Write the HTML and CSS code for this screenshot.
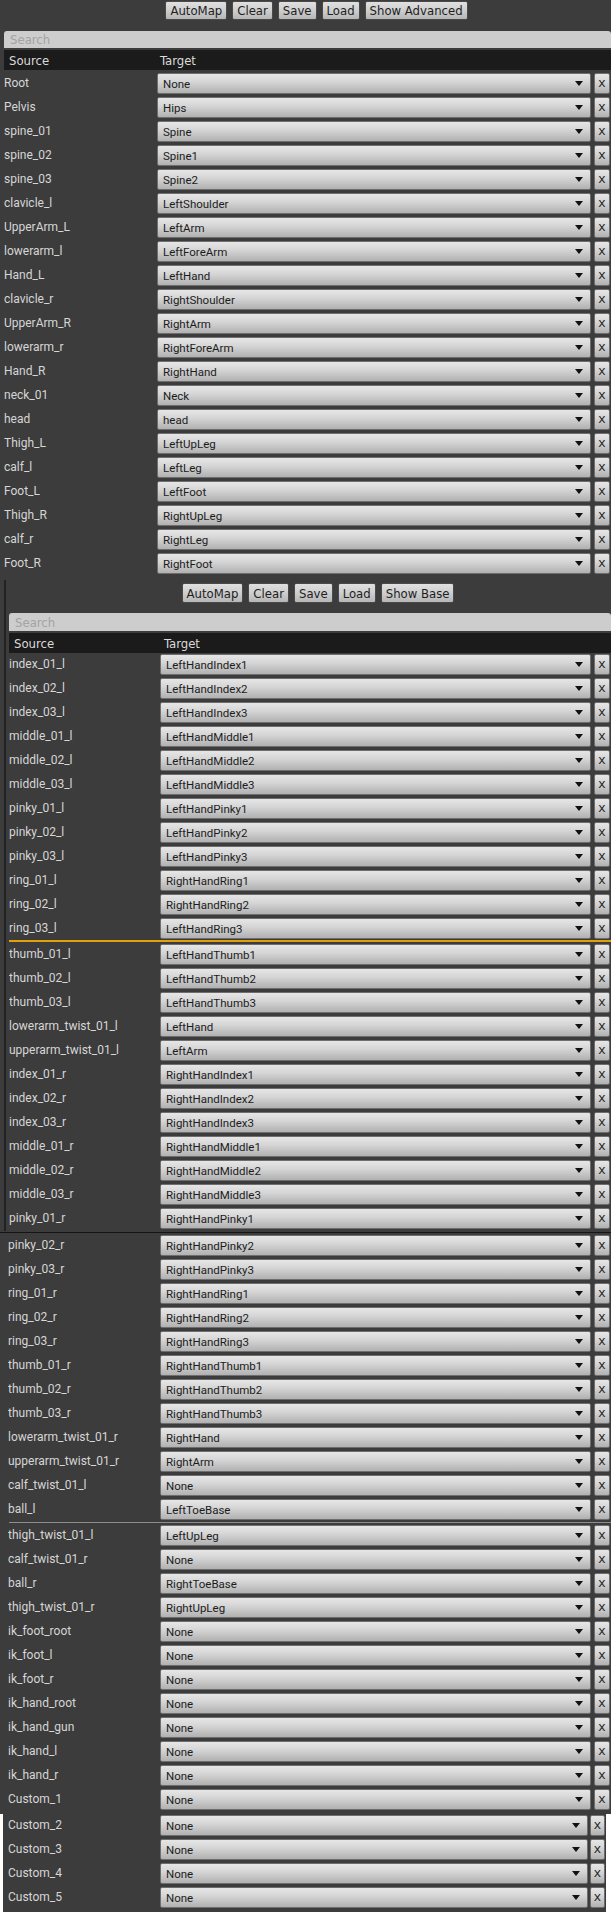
FILE: index.html
```html
<!DOCTYPE html>
<html>
<head>
<meta charset="utf-8">
<link rel="stylesheet" href="styles.css">
</head>
<body>
<section class="sec sec1">
  <div class="toolbar tb1">
    <button class="btn">AutoMap</button><button class="btn">Clear</button><button class="btn">Save</button><button class="btn">Load</button><button class="btn">Show Advanced</button>
  </div>
  <div class="search">Search</div>
  <div class="thead"><span class="th-src">Source</span><span class="th-tgt">Target</span></div>
  <div class="rows">
    <div class="row"><span class="lbl">Root</span><span class="dd"><span class="ddt">None</span><span class="arr"></span></span><span class="xb">x</span></div>
    <div class="row"><span class="lbl">Pelvis</span><span class="dd"><span class="ddt">Hips</span><span class="arr"></span></span><span class="xb">x</span></div>
    <div class="row"><span class="lbl">spine_01</span><span class="dd"><span class="ddt">Spine</span><span class="arr"></span></span><span class="xb">x</span></div>
    <div class="row"><span class="lbl">spine_02</span><span class="dd"><span class="ddt">Spine1</span><span class="arr"></span></span><span class="xb">x</span></div>
    <div class="row"><span class="lbl">spine_03</span><span class="dd"><span class="ddt">Spine2</span><span class="arr"></span></span><span class="xb">x</span></div>
    <div class="row"><span class="lbl">clavicle_l</span><span class="dd"><span class="ddt">LeftShoulder</span><span class="arr"></span></span><span class="xb">x</span></div>
    <div class="row"><span class="lbl">UpperArm_L</span><span class="dd"><span class="ddt">LeftArm</span><span class="arr"></span></span><span class="xb">x</span></div>
    <div class="row"><span class="lbl">lowerarm_l</span><span class="dd"><span class="ddt">LeftForeArm</span><span class="arr"></span></span><span class="xb">x</span></div>
    <div class="row"><span class="lbl">Hand_L</span><span class="dd"><span class="ddt">LeftHand</span><span class="arr"></span></span><span class="xb">x</span></div>
    <div class="row"><span class="lbl">clavicle_r</span><span class="dd"><span class="ddt">RightShoulder</span><span class="arr"></span></span><span class="xb">x</span></div>
    <div class="row"><span class="lbl">UpperArm_R</span><span class="dd"><span class="ddt">RightArm</span><span class="arr"></span></span><span class="xb">x</span></div>
    <div class="row"><span class="lbl">lowerarm_r</span><span class="dd"><span class="ddt">RightForeArm</span><span class="arr"></span></span><span class="xb">x</span></div>
    <div class="row"><span class="lbl">Hand_R</span><span class="dd"><span class="ddt">RightHand</span><span class="arr"></span></span><span class="xb">x</span></div>
    <div class="row"><span class="lbl">neck_01</span><span class="dd"><span class="ddt">Neck</span><span class="arr"></span></span><span class="xb">x</span></div>
    <div class="row"><span class="lbl">head</span><span class="dd"><span class="ddt">head</span><span class="arr"></span></span><span class="xb">x</span></div>
    <div class="row"><span class="lbl">Thigh_L</span><span class="dd"><span class="ddt">LeftUpLeg</span><span class="arr"></span></span><span class="xb">x</span></div>
    <div class="row"><span class="lbl">calf_l</span><span class="dd"><span class="ddt">LeftLeg</span><span class="arr"></span></span><span class="xb">x</span></div>
    <div class="row"><span class="lbl">Foot_L</span><span class="dd"><span class="ddt">LeftFoot</span><span class="arr"></span></span><span class="xb">x</span></div>
    <div class="row"><span class="lbl">Thigh_R</span><span class="dd"><span class="ddt">RightUpLeg</span><span class="arr"></span></span><span class="xb">x</span></div>
    <div class="row"><span class="lbl">calf_r</span><span class="dd"><span class="ddt">RightLeg</span><span class="arr"></span></span><span class="xb">x</span></div>
    <div class="row"><span class="lbl">Foot_R</span><span class="dd"><span class="ddt">RightFoot</span><span class="arr"></span></span><span class="xb">x</span></div>
  </div>
</section>

<section class="sec sec2">
  <div class="toolbar tb2">
    <button class="btn">AutoMap</button><button class="btn">Clear</button><button class="btn">Save</button><button class="btn">Load</button><button class="btn">Show Base</button>
  </div>
  <div class="search">Search</div>
  <div class="thead"><span class="th-src">Source</span><span class="th-tgt">Target</span></div>
  <div class="rows">
    <div class="row"><span class="lbl">index_01_l</span><span class="dd"><span class="ddt">LeftHandIndex1</span><span class="arr"></span></span><span class="xb">x</span></div>
    <div class="row"><span class="lbl">index_02_l</span><span class="dd"><span class="ddt">LeftHandIndex2</span><span class="arr"></span></span><span class="xb">x</span></div>
    <div class="row"><span class="lbl">index_03_l</span><span class="dd"><span class="ddt">LeftHandIndex3</span><span class="arr"></span></span><span class="xb">x</span></div>
    <div class="row"><span class="lbl">middle_01_l</span><span class="dd"><span class="ddt">LeftHandMiddle1</span><span class="arr"></span></span><span class="xb">x</span></div>
    <div class="row"><span class="lbl">middle_02_l</span><span class="dd"><span class="ddt">LeftHandMiddle2</span><span class="arr"></span></span><span class="xb">x</span></div>
    <div class="row"><span class="lbl">middle_03_l</span><span class="dd"><span class="ddt">LeftHandMiddle3</span><span class="arr"></span></span><span class="xb">x</span></div>
    <div class="row"><span class="lbl">pinky_01_l</span><span class="dd"><span class="ddt">LeftHandPinky1</span><span class="arr"></span></span><span class="xb">x</span></div>
    <div class="row"><span class="lbl">pinky_02_l</span><span class="dd"><span class="ddt">LeftHandPinky2</span><span class="arr"></span></span><span class="xb">x</span></div>
    <div class="row"><span class="lbl">pinky_03_l</span><span class="dd"><span class="ddt">LeftHandPinky3</span><span class="arr"></span></span><span class="xb">x</span></div>
    <div class="row"><span class="lbl">ring_01_l</span><span class="dd"><span class="ddt">RightHandRing1</span><span class="arr"></span></span><span class="xb">x</span></div>
    <div class="row"><span class="lbl">ring_02_l</span><span class="dd"><span class="ddt">RightHandRing2</span><span class="arr"></span></span><span class="xb">x</span></div>
    <div class="row"><span class="lbl">ring_03_l</span><span class="dd"><span class="ddt">LeftHandRing3</span><span class="arr"></span></span><span class="xb">x</span></div>
  </div>
  <div class="sep-orange"></div>
  <div class="rows">
    <div class="row"><span class="lbl">thumb_01_l</span><span class="dd"><span class="ddt">LeftHandThumb1</span><span class="arr"></span></span><span class="xb">x</span></div>
    <div class="row"><span class="lbl">thumb_02_l</span><span class="dd"><span class="ddt">LeftHandThumb2</span><span class="arr"></span></span><span class="xb">x</span></div>
    <div class="row"><span class="lbl">thumb_03_l</span><span class="dd"><span class="ddt">LeftHandThumb3</span><span class="arr"></span></span><span class="xb">x</span></div>
    <div class="row"><span class="lbl">lowerarm_twist_01_l</span><span class="dd"><span class="ddt">LeftHand</span><span class="arr"></span></span><span class="xb">x</span></div>
    <div class="row"><span class="lbl">upperarm_twist_01_l</span><span class="dd"><span class="ddt">LeftArm</span><span class="arr"></span></span><span class="xb">x</span></div>
    <div class="row"><span class="lbl">index_01_r</span><span class="dd"><span class="ddt">RightHandIndex1</span><span class="arr"></span></span><span class="xb">x</span></div>
    <div class="row"><span class="lbl">index_02_r</span><span class="dd"><span class="ddt">RightHandIndex2</span><span class="arr"></span></span><span class="xb">x</span></div>
    <div class="row"><span class="lbl">index_03_r</span><span class="dd"><span class="ddt">RightHandIndex3</span><span class="arr"></span></span><span class="xb">x</span></div>
    <div class="row"><span class="lbl">middle_01_r</span><span class="dd"><span class="ddt">RightHandMiddle1</span><span class="arr"></span></span><span class="xb">x</span></div>
    <div class="row"><span class="lbl">middle_02_r</span><span class="dd"><span class="ddt">RightHandMiddle2</span><span class="arr"></span></span><span class="xb">x</span></div>
    <div class="row"><span class="lbl">middle_03_r</span><span class="dd"><span class="ddt">RightHandMiddle3</span><span class="arr"></span></span><span class="xb">x</span></div>
    <div class="row"><span class="lbl">pinky_01_r</span><span class="dd"><span class="ddt">RightHandPinky1</span><span class="arr"></span></span><span class="xb">x</span></div>
  </div>
</section>

<section class="sec sec3">
  <div class="rows">
    <div class="row"><span class="lbl">pinky_02_r</span><span class="dd"><span class="ddt">RightHandPinky2</span><span class="arr"></span></span><span class="xb">x</span></div>
    <div class="row"><span class="lbl">pinky_03_r</span><span class="dd"><span class="ddt">RightHandPinky3</span><span class="arr"></span></span><span class="xb">x</span></div>
    <div class="row"><span class="lbl">ring_01_r</span><span class="dd"><span class="ddt">RightHandRing1</span><span class="arr"></span></span><span class="xb">x</span></div>
    <div class="row"><span class="lbl">ring_02_r</span><span class="dd"><span class="ddt">RightHandRing2</span><span class="arr"></span></span><span class="xb">x</span></div>
    <div class="row"><span class="lbl">ring_03_r</span><span class="dd"><span class="ddt">RightHandRing3</span><span class="arr"></span></span><span class="xb">x</span></div>
    <div class="row"><span class="lbl">thumb_01_r</span><span class="dd"><span class="ddt">RightHandThumb1</span><span class="arr"></span></span><span class="xb">x</span></div>
    <div class="row"><span class="lbl">thumb_02_r</span><span class="dd"><span class="ddt">RightHandThumb2</span><span class="arr"></span></span><span class="xb">x</span></div>
    <div class="row"><span class="lbl">thumb_03_r</span><span class="dd"><span class="ddt">RightHandThumb3</span><span class="arr"></span></span><span class="xb">x</span></div>
    <div class="row"><span class="lbl">lowerarm_twist_01_r</span><span class="dd"><span class="ddt">RightHand</span><span class="arr"></span></span><span class="xb">x</span></div>
    <div class="row"><span class="lbl">upperarm_twist_01_r</span><span class="dd"><span class="ddt">RightArm</span><span class="arr"></span></span><span class="xb">x</span></div>
    <div class="row"><span class="lbl">calf_twist_01_l</span><span class="dd"><span class="ddt">None</span><span class="arr"></span></span><span class="xb">x</span></div>
    <div class="row"><span class="lbl">ball_l</span><span class="dd"><span class="ddt">LeftToeBase</span><span class="arr"></span></span><span class="xb">x</span></div>
  </div>
  <div class="sep-gray"></div>
</section>

<section class="sec sec4">
  <div class="rows">
    <div class="row"><span class="lbl">thigh_twist_01_l</span><span class="dd"><span class="ddt">LeftUpLeg</span><span class="arr"></span></span><span class="xb">x</span></div>
    <div class="row"><span class="lbl">calf_twist_01_r</span><span class="dd"><span class="ddt">None</span><span class="arr"></span></span><span class="xb">x</span></div>
    <div class="row"><span class="lbl">ball_r</span><span class="dd"><span class="ddt">RightToeBase</span><span class="arr"></span></span><span class="xb">x</span></div>
    <div class="row"><span class="lbl">thigh_twist_01_r</span><span class="dd"><span class="ddt">RightUpLeg</span><span class="arr"></span></span><span class="xb">x</span></div>
    <div class="row"><span class="lbl">ik_foot_root</span><span class="dd"><span class="ddt">None</span><span class="arr"></span></span><span class="xb">x</span></div>
    <div class="row"><span class="lbl">ik_foot_l</span><span class="dd"><span class="ddt">None</span><span class="arr"></span></span><span class="xb">x</span></div>
    <div class="row"><span class="lbl">ik_foot_r</span><span class="dd"><span class="ddt">None</span><span class="arr"></span></span><span class="xb">x</span></div>
    <div class="row"><span class="lbl">ik_hand_root</span><span class="dd"><span class="ddt">None</span><span class="arr"></span></span><span class="xb">x</span></div>
    <div class="row"><span class="lbl">ik_hand_gun</span><span class="dd"><span class="ddt">None</span><span class="arr"></span></span><span class="xb">x</span></div>
    <div class="row"><span class="lbl">ik_hand_l</span><span class="dd"><span class="ddt">None</span><span class="arr"></span></span><span class="xb">x</span></div>
    <div class="row"><span class="lbl">ik_hand_r</span><span class="dd"><span class="ddt">None</span><span class="arr"></span></span><span class="xb">x</span></div>
    <div class="row"><span class="lbl">Custom_1</span><span class="dd"><span class="ddt">None</span><span class="arr"></span></span><span class="xb">x</span></div>
  </div>
</section>

<div class="tail">
  <section class="sec sec5">
    <div class="rows">
      <div class="row"><span class="lbl">Custom_2</span><span class="dd"><span class="ddt">None</span><span class="arr"></span></span><span class="xb">x</span></div>
      <div class="row"><span class="lbl">Custom_3</span><span class="dd"><span class="ddt">None</span><span class="arr"></span></span><span class="xb">x</span></div>
      <div class="row"><span class="lbl">Custom_4</span><span class="dd"><span class="ddt">None</span><span class="arr"></span></span><span class="xb">x</span></div>
      <div class="row"><span class="lbl">Custom_5</span><span class="dd"><span class="ddt">None</span><span class="arr"></span></span><span class="xb">x</span></div>
    </div>
  </section>
</div>
</body>
</html>
```

FILE: styles.css
```css
html {
  background: #ffffff;
}

body {
  margin: 0;
  width: 611px;
  background: #3c3c3c;
  font-family: Roboto, "Liberation Sans", sans-serif;
  color: #d8d8d8;
}

.sec {
  background: #3c3c3c;
}

/* ---------- toolbar ---------- */
.toolbar {
  display: flex;
  justify-content: center;
  gap: 5px;
}

.tb1 {
  padding: 1px 0 0 22px;
  height: 19px;
}

.tb2 {
  padding: 3px 0 0 19px;
  height: 20px;
}

.btn {
  font-family: "Liberation Sans Narrow", "DejaVu Sans Condensed", Roboto, sans-serif;
  font-size: 13px;
  color: #1e1e1e;
  height: 100%;
  padding: 0 4px;
  margin: 0;
  border: 1px solid #4a4a4a;
  border-radius: 2px;
  background: linear-gradient(#e0e0e0, #d0d0d0 45%, #b6b6b6);
  line-height: 1;
}

/* ---------- search + header ---------- */
.search {
  font-family: "Liberation Sans Narrow", "DejaVu Sans Condensed", Roboto, sans-serif;
  font-size: 13px;
  color: #a3a3a3;
  background: #cdcdcd;
  border-radius: 3px 3px 0 0;
  display: flex;
  align-items: center;
  padding-left: 6px;
}

.sec1 .search {
  margin: 11px 0 0 4px;
  height: 17px;
}

.sec2 .search {
  margin: 10px 0 0 3px;
  height: 18px;
}

.thead {
  background: #1b1b1b;
  display: flex;
  align-items: center;
  height: 20px;
  margin-top: 2px;
  font-family: "Liberation Sans Narrow", "DejaVu Sans Condensed", Roboto, sans-serif;
  font-size: 13px;
  color: #dadada;
}

.sec1 .thead {
  margin-left: 4px;
}

.sec2 .thead {
  margin-left: 3px;
}

.th-src {
  padding-left: 5px;
}

.sec1 .th-src {
  width: 151px;
}

.sec2 .th-src {
  width: 150px;
}

/* ---------- rows ---------- */
.rows {
  display: flex;
  flex-direction: column;
}

.sec1 .rows {
  margin-top: 2px;
}

.sec2 .rows:first-of-type {
  margin-top: 3px;
}

.row {
  display: flex;
  align-items: flex-start;
  height: 24px;
  padding-right: 1px;
}

.lbl {
  font-size: 12px;
  line-height: 22px;
  color: #d6d6d6;
  white-space: nowrap;
  overflow: hidden;
}

.sec1 .row {
  padding-left: 4px;
}

.sec1 .lbl {
  flex: 0 0 153px;
}

.sec2 .row {
  padding-left: 3px;
}

.sec2 .lbl {
  flex: 0 0 151px;
}

.sec3 .row,
.sec4 .row {
  padding-left: 8px;
}

.sec3 .lbl,
.sec4 .lbl {
  flex: 0 0 152px;
}

.dd {
  flex: 1;
  margin-top: 1px;
  height: 21px;
  box-sizing: border-box;
  border: 1px solid #6e6e6e;
  border-radius: 2px;
  background: linear-gradient(#e6e6e6, #d6d6d6 40%, #b1b1b1);
  display: flex;
  align-items: center;
  padding-left: 5px;
  color: #1c1c1c;
  font-size: 11.5px;
}

.ddt {
  flex: 1;
}

.arr {
  width: 0;
  height: 0;
  border-left: 4px solid transparent;
  border-right: 4px solid transparent;
  border-top: 5px solid #111;
  margin-right: 7px;
}

.xb {
  flex: 0 0 16px;
  margin-left: 3px;
  margin-top: 1px;
  height: 21px;
  box-sizing: border-box;
  border: 1px solid #6e6e6e;
  border-radius: 2px;
  background: linear-gradient(#e6e6e6, #d6d6d6 40%, #b1b1b1);
  display: flex;
  align-items: center;
  justify-content: center;
  font-family: "Liberation Mono", "DejaVu Sans Mono", monospace;
  font-size: 13px;
  color: #222;
}

/* ---------- section 2 panel ---------- */
.sec2 {
  margin-top: 4px;
  margin-left: 4px;
  border-left: 2px solid #222;
}

.sep-orange {
  margin: -1px 0 1px 3px;
  height: 2px;
  background: #e3a00c;
}

/* ---------- section 3 ---------- */
.sec3 {
  margin-top: 1px;
  border-top: 1px solid #151515;
  padding-top: 1px;
}

.sep-gray {
  margin-left: 9px;
  height: 1px;
  background: #8d8d8d;
  border-bottom: 1px solid #3c3c3c;
}

/* ---------- section 4 ---------- */
.sec4 {
  padding-bottom: 2px;
}

/* ---------- section 5 ---------- */
.tail {
  background: #ffffff;
  padding: 0 5px 0 3px;
}

.sec5 {
  padding-bottom: 2px;
}

.sec5 .row {
  padding-left: 5px;
}

.sec5 .lbl {
  flex: 0 0 152px;
}

.sec5 .xb {
  flex-basis: 15px;
  margin-left: 2px;
}
```
